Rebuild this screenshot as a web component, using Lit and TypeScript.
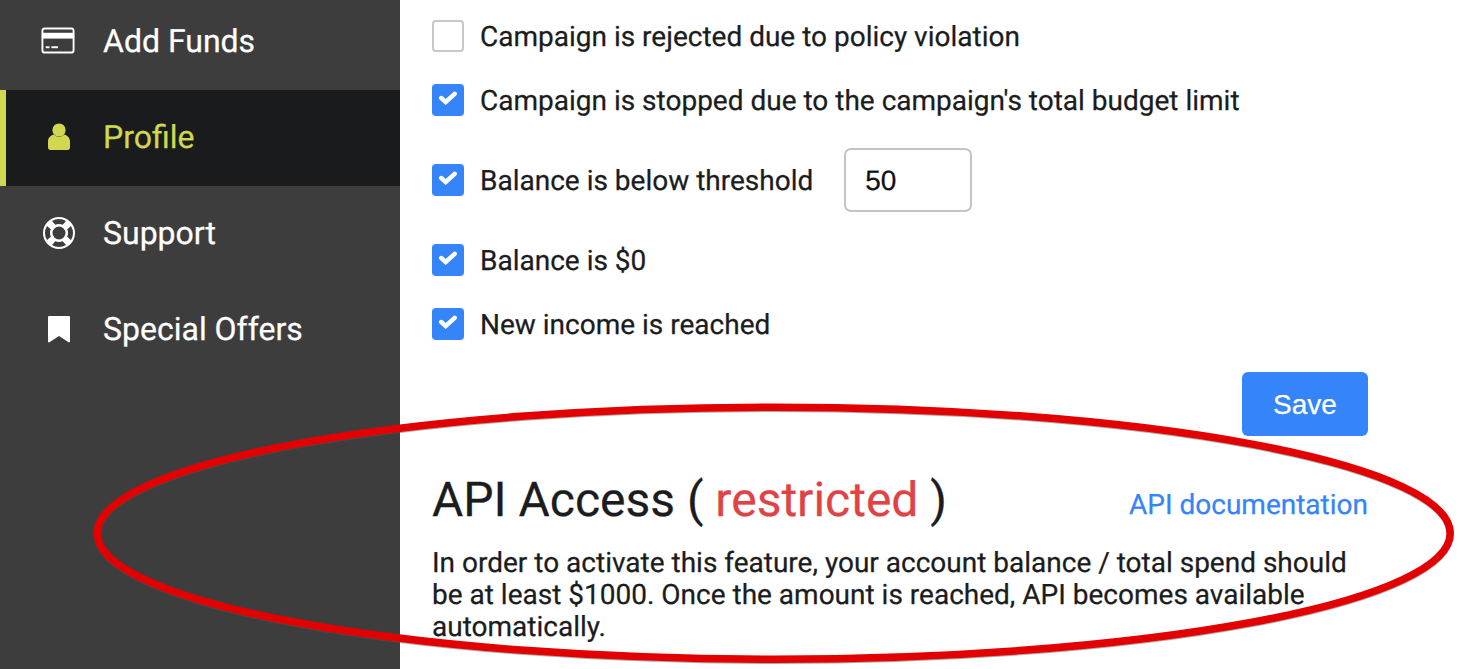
import { LitElement, html, css, svg } from "lit";
import { customElement } from "lit/decorators.js";

const card = svg`<svg class="ic card" viewBox="0 0 36 28" width="34" height="27" preserveAspectRatio="none"><rect x="1.500" y="1.500" width="33" height="25" rx="2.500" fill="none" stroke="currentColor" stroke-width="2"/><rect x="1" y="6" width="34" height="6" fill="currentColor"/><rect x="5" y="20" width="4" height="2" fill="currentColor"/><rect x="11" y="20" width="7" height="2" fill="currentColor"/></svg>`;
const user = svg`<svg class="ic" viewBox="0 0 24 28" width="24" height="28"><circle cx="12" cy="7" r="6.600" fill="currentColor"/><path d="M1 24.500v-6C1 14.500 4 12 7 11.500c1.500 1.500 3 2.200 5 2.200s3.500-.7 5-2.200c3 .5 6 3 6 7v6c0 1.500-1 2.500-2.500 2.500h-17C2 27 1 26 1 24.500z" fill="currentColor"/></svg>`;
const buoy = svg`<svg class="ic" viewBox="0 0 32 32" width="32" height="32"><path fill="currentColor" fill-rule="evenodd" d="M16 0a16 16 0 1 0 0 32a16 16 0 0 0 0-32zM16 2c2.600 0 5 .7 7 2l-3.300 3.800a9 9 0 0 0-7.400 0L9 4c2-1.300 4.400-2 7-2zM16 9.500a6.500 6.500 0 1 1 0 13a6.500 6.500 0 0 1 0-13zM4 9l3.800 3.300a9 9 0 0 0 0 7.400L4 23a14 14 0 0 1 0-14zM28 9a14 14 0 0 1 0 14l-3.800-3.300a9 9 0 0 0 0-7.400zM12.300 24.200a9 9 0 0 0 7.400 0L23 28c-2 1.300-4.400 2-7 2s-5-.7-7-2z"/></svg>`;
const bookmark = svg`<svg class="ic" viewBox="0 0 24 28" width="24" height="28"><path fill="currentColor" d="M2 1h20a1 1 0 0 1 1 1v25l-1 .5L12 21 2 27.500 1 27V2a1 1 0 0 1 1-1z"/></svg>`;
const check = svg`<svg class="chk" viewBox="0 0 20 16" width="20" height="16"><path d="M3.200 7l4.500 4 9-8.200" fill="none" stroke="#fff" stroke-width="4.400" stroke-linecap="round"/></svg>`;

@customElement("app-root")
export class AppRoot extends LitElement {
  static styles = css`
    :host { display: block; position: relative; width: 1459px; height: 669px; overflow: hidden; background: #fff; font-family: Roboto, sans-serif; color: #1b1c1e; text-rendering: geometricPrecision; -webkit-text-stroke: 0.25px currentColor; }
    .page { display: flex; height: 669px; }
    .side { width: 400px; flex: none; background: #3d3d3d; color: #fff; overflow: hidden; }
    .nav { display: flex; flex-direction: column; margin-top: -6px; }
    .item { display: flex; align-items: center; box-sizing: border-box; height: 96px; padding-bottom: 2px; font-size: 32px; border-left: 6px solid transparent; }
    .item.active { background: #1a1b1d; color: #cfd84e; border-left-color: #cfd84e; }
    .icbox { width: 36px; margin-left: 35px; margin-right: 26px; margin-bottom: 1px; display: flex; justify-content: center; }
    .card { margin-right: 2px; }
    .main { flex: 1; padding: 20px 91px 0 32px; min-width: 0; }
    .row { display: flex; align-items: center; height: 32px; font-size: 28px; gap: 16px; }
    .r1 { margin-top: 32px; }
    .r2 { margin-top: 48px; }
    .box { width: 32px; height: 32px; flex: none; box-sizing: border-box; border-radius: 4px; background: #3584f9; display: flex; align-items: center; justify-content: center; }
    .chk { margin-bottom: 2px; }
    .box.off { background: #fff; border: 2px solid #c8c8c8; }
    .num { box-sizing: border-box; width: 128px; height: 64px; margin: -16px 0 -16px 15px; border: 2px solid #c4c4c4; border-radius: 7px; font: 28px "Liberation Sans", sans-serif; color: #111; padding: 2px 0 0 19px; display: flex; align-items: center; }
    .save-wrap { display: flex; justify-content: flex-end; margin-top: 32px; }
    .save { width: 126px; height: 64px; border: 0; border-radius: 6px; background: #3584f9; color: #fff; font: 28px "Liberation Sans", sans-serif; padding: 2px 0 0; }
    .head { display: flex; justify-content: space-between; align-items: center; margin-top: 36px; height: 56px; }
    h2 { margin: 0; font-size: 48px; font-weight: 400; line-height: 56px; }
    .red { color: #df4346; }
    .link { color: #3584f9; font-size: 28px; padding-top: 8px; }
    p { margin: 19px 0 0; font-size: 28px; line-height: 32px; color: #1b1c1e; }
    .oval { position: absolute; left: 0; top: 0; pointer-events: none; }
  `;

  render() {
    const items = [
      [card, "Add Funds", false],
      [user, "Profile", true],
      [buoy, "Support", false],
      [bookmark, "Special Offers", false],
    ] as const;
    return html`
      <div class="page">
        <aside class="side">
          <nav class="nav">
            ${items.map(([i, t, a]) => html`<div class="item ${a ? "active" : ""}"><span class="icbox">${i}</span><span>${t}</span></div>`)}
          </nav>
        </aside>
        <main class="main">
          <div class="row"><span class="box off"></span><span>Campaign is rejected due to policy violation</span></div>
          <div class="row r1"><span class="box">${check}</span><span>Campaign is stopped due to the campaign's total budget limit</span></div>
          <div class="row r2"><span class="box">${check}</span><span>Balance is below threshold</span><span class="num">50</span></div>
          <div class="row r2"><span class="box">${check}</span><span>Balance is $0</span></div>
          <div class="row r1"><span class="box">${check}</span><span>New income is reached</span></div>
          <div class="save-wrap"><button class="save">Save</button></div>
          <div class="head">
            <h2>API Access ( <span class="red">restricted</span> )</h2>
            <span class="link">API documentation</span>
          </div>
          <p>In order to activate this feature, your account balance / total spend should be at least $1000. Once the amount is reached, API becomes available automatically.</p>
        </main>
      </div>
      <svg class="oval" width="1459" height="669" viewBox="0 0 1459 669">
        <ellipse cx="773.700" cy="533.200" rx="676.500" ry="126" fill="none" stroke="#555" stroke-opacity=".5" stroke-width="7.500" transform="translate(0 1)"/>
        <ellipse cx="773.700" cy="533.200" rx="676.500" ry="126" fill="none" stroke="#e30000" stroke-width="7.500"/>
      </svg>
    `;
  }
}
